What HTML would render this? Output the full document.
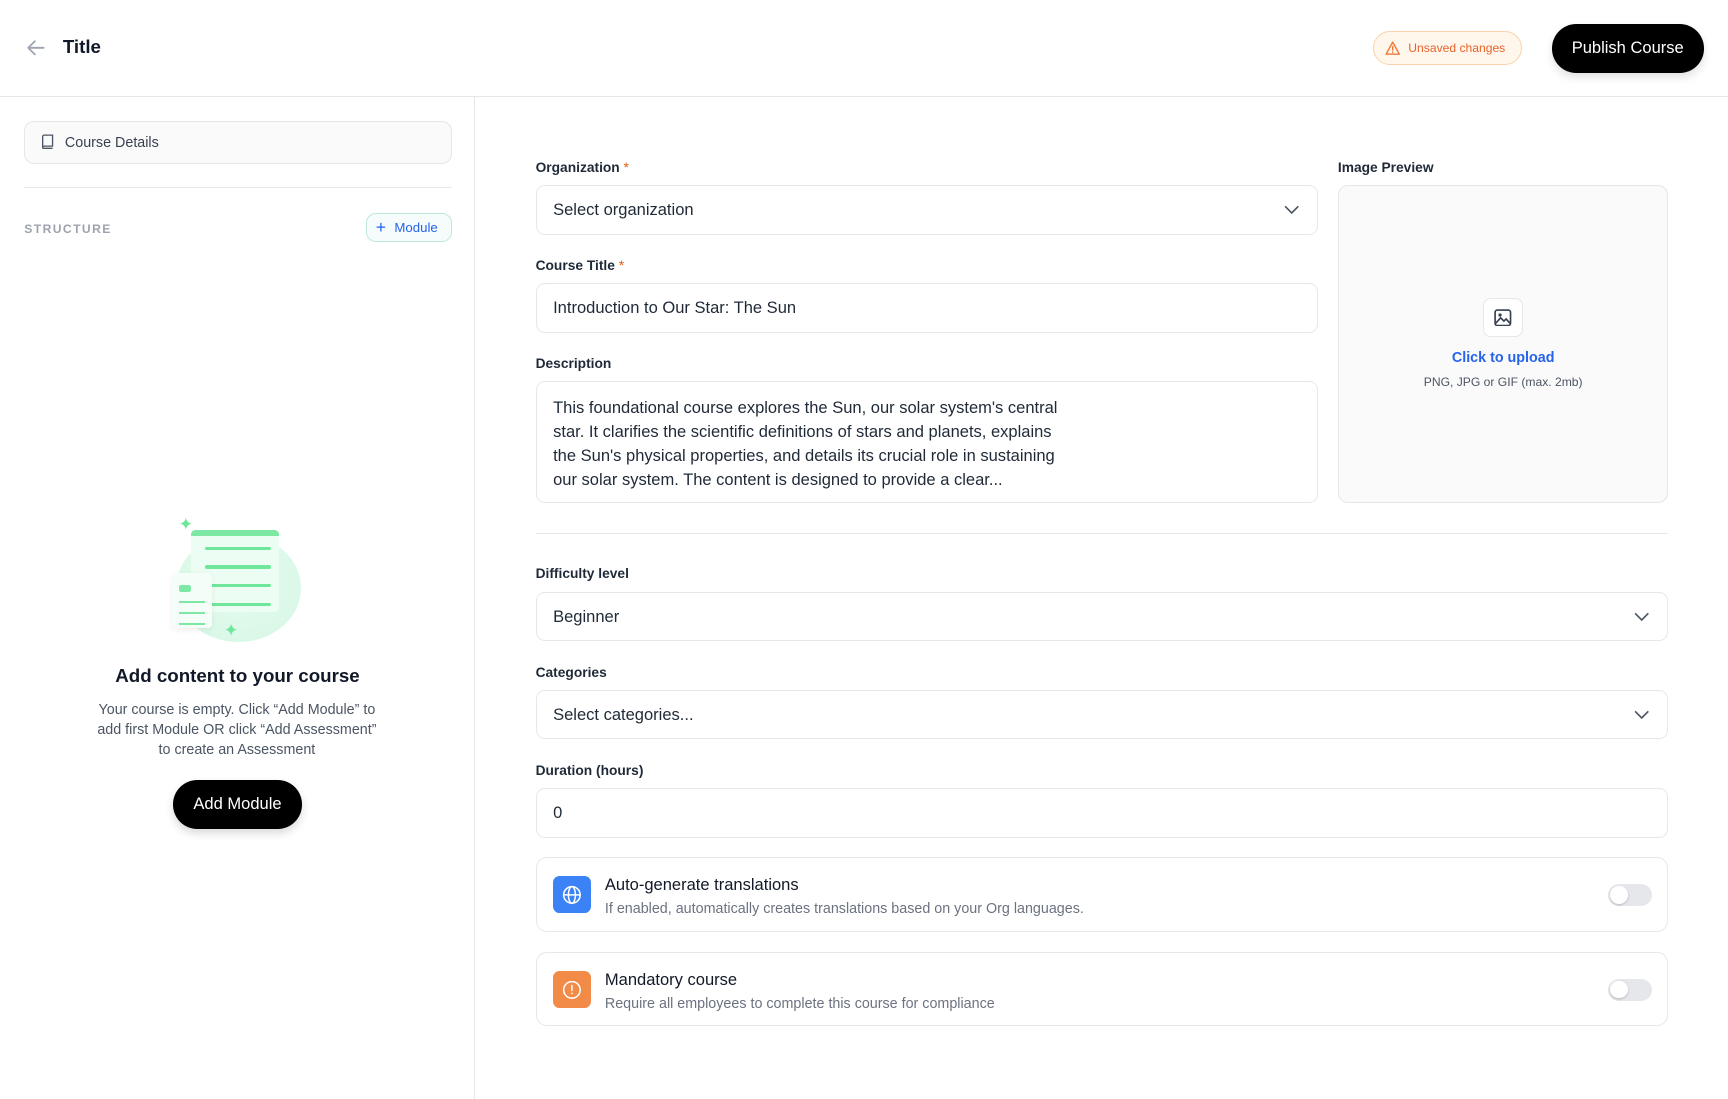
<!DOCTYPE html>
<html><head><meta charset="utf-8"><style>
html{zoom:1.10204}
*{box-sizing:border-box;margin:0;padding:0}
body{width:1568px;height:997px;overflow:hidden;background:#fff;font-family:"Liberation Sans",sans-serif;color:#111827;position:relative}
.abs{position:absolute}
.hdr{left:0;top:0;width:1568px;height:88px;border-bottom:1px solid #e5e7eb}
.side{left:0;top:88px;width:431px;height:909px;border-right:1px solid #e5e7eb}
.lbl{font-size:12.5px;font-weight:bold;color:#1f2937;left:486px}
.lbl b{color:#ea580c;font-weight:normal}
.inp{border:1px solid #e5e7eb;border-radius:8px;background:#fff;font-size:15px;color:#1f2937;padding-left:15px;display:flex;align-items:center}
.chev{position:absolute;right:16px;top:50%;margin-top:-6px}
.card{left:486px;width:1028px;border:1px solid #e5e7eb;border-radius:10px}
.ic{position:absolute;left:15px;top:16px;width:34px;height:34px;border-radius:6px;display:flex;align-items:center;justify-content:center}
.ct{position:absolute;left:62px;top:15px;font-size:15px;color:#111827}
.cs{position:absolute;left:62px;top:39px;font-size:13px;color:#6b7280}
.tg{position:absolute;right:14px;top:23px;width:40px;height:20px;border-radius:10px;background:#e5e7eb}
.tg::after{content:"";position:absolute;left:2px;top:2px;width:16px;height:16px;border-radius:50%;background:#fff;box-shadow:0 1px 2px rgba(0,0,0,.2)}
</style></head><body>
<div class="abs hdr"></div>
<svg class="abs" style="left:24px;top:35px" width="17" height="16" viewBox="0 0 17 16"><path d="M16 8H2M8 2L2 8l6 6" fill="none" stroke="#9ca3af" stroke-width="1.6" stroke-linecap="round" stroke-linejoin="round"/></svg>
<div class="abs" style="left:57px;top:33px;font-size:17px;font-weight:bold;color:#111827">Title</div>
<div class="abs" style="left:1246px;top:28px;width:135px;height:31px;border:1px solid #fcd3a9;background:#fff6ec;border-radius:16px;font-size:11px;color:#e8632a;display:flex;align-items:center;padding-left:31px">Unsaved changes</div>
<svg class="abs" style="left:1257px;top:37px" width="14" height="13" viewBox="0 0 14 13"><path d="M7 1L13 12H1Z" fill="none" stroke="#ef7a3a" stroke-width="1.3" stroke-linejoin="round"/><path d="M7 5v3.2M7 10v.3" stroke="#ef7a3a" stroke-width="1.3" stroke-linecap="round"/></svg>
<div class="abs" style="left:1408px;top:22px;width:138px;height:44px;background:#000;border-radius:22px;color:#fff;font-size:15px;display:flex;align-items:center;justify-content:center;box-shadow:0 4px 8px rgba(0,0,0,.12)">Publish Course</div>

<div class="abs side"></div>
<div class="abs" style="left:22px;top:110px;width:388px;height:39px;border:1px solid #e5e7eb;border-radius:9px;background:#fafafa;font-size:13px;color:#374151;display:flex;align-items:center;padding-left:36px">Course Details</div>
<svg class="abs" style="left:37px;top:122px" width="12" height="14" viewBox="0 0 12 14"><path d="M1.5 12V2.5A1.5 1.5 0 0 1 3 1h7.5v10H3a1.5 1.5 0 0 0-1.5 1.5A1.5 1.5 0 0 0 3 13h7.5" fill="none" stroke="#4b5563" stroke-width="1.2"/></svg>
<div class="abs" style="left:22px;top:170px;width:388px;height:1px;background:#e5e7eb"></div>
<div class="abs" style="left:22px;top:201px;font-size:11px;letter-spacing:1.3px;color:#9ca3af;font-weight:bold">STRUCTURE</div>
<div class="abs" style="left:332px;top:193px;width:78px;height:27px;border:1px solid #bfe8dc;border-radius:9px;background:#f6fcfb;color:#2563eb;font-size:12px;display:flex;align-items:center;padding-left:25px">Module</div>
<div class="abs" style="left:341px;top:200px;color:#2563eb;font-size:16px;line-height:13px">+</div>

<div class="abs" style="left:160px;top:485px;width:113px;height:98px;border-radius:50%;background:radial-gradient(circle at 50% 40%,#e6fbef,#d6f7e4)"></div>
<div class="abs" style="left:173px;top:481px;width:80px;height:74px;background:#ecfdf3;border-top:6px solid #7de8a4;border-radius:4px"></div>
<div class="abs" style="left:186px;top:496px;width:60px;height:3px;background:#6ee79a;border-radius:2px"></div>
<div class="abs" style="left:186px;top:513px;width:60px;height:3px;background:#6ee79a;border-radius:2px"></div>
<div class="abs" style="left:186px;top:530px;width:60px;height:3px;background:#6ee79a;border-radius:2px"></div>
<div class="abs" style="left:186px;top:547px;width:60px;height:3px;background:#6ee79a;border-radius:2px"></div>
<div class="abs" style="left:156px;top:520px;width:36px;height:50px;background:#f4fdf7;border-radius:4px;box-shadow:0 2px 6px rgba(0,0,0,.06)"></div>
<div class="abs" style="left:162px;top:531px;width:11px;height:6px;background:#7de8a4;border-radius:2px"></div>
<div class="abs" style="left:162px;top:545px;width:24px;height:2px;background:#7de8a4"></div>
<div class="abs" style="left:162px;top:555px;width:24px;height:2px;background:#7de8a4"></div>
<div class="abs" style="left:162px;top:565px;width:24px;height:2px;background:#7de8a4"></div>
<div class="abs" style="left:162px;top:466px;color:#6ee79a;font-size:16px">✦</div>
<div class="abs" style="left:203px;top:563px;color:#6ee79a;font-size:16px">✦</div>

<div class="abs" style="left:0;top:603px;width:431px;text-align:center;font-size:17px;font-weight:bold;color:#111827">Add content to your course</div>
<div class="abs" style="left:86px;top:636px;width:258px;text-align:center;font-size:13px;line-height:18px;color:#4b5563">Your course is empty. Click “Add Module” to add first Module OR click “Add Assessment” to create an Assessment</div>
<div class="abs" style="left:157px;top:708px;width:117px;height:44px;background:#000;border-radius:22px;color:#fff;font-size:15px;display:flex;align-items:center;justify-content:center;box-shadow:0 4px 8px rgba(0,0,0,.15)">Add Module</div>

<div class="abs lbl" style="top:145px">Organization <b>*</b></div>
<div class="abs inp" style="left:486px;top:168px;width:710px;height:45px">Select organization<svg class="chev" width="14" height="12" viewBox="0 0 14 12"><path d="M1 3l6 6 6-6" fill="none" stroke="#4b5563" stroke-width="1.5"/></svg></div>
<div class="abs lbl" style="top:234px">Course Title <b>*</b></div>
<div class="abs inp" style="left:486px;top:257px;width:710px;height:45px">Introduction to Our Star: The Sun</div>
<div class="abs lbl" style="top:323px">Description</div>
<div class="abs inp" style="left:486px;top:346px;width:710px;height:110px;align-items:flex-start;padding-top:12px;line-height:22px"><div style="width:465px">This foundational course explores the Sun, our solar system's central star. It clarifies the scientific definitions of stars and planets, explains the Sun's physical properties, and details its crucial role in sustaining our solar system. The content is designed to provide a clear...</div></div>

<div class="abs lbl" style="left:1214px;top:145px">Image Preview</div>
<div class="abs" style="left:1214px;top:168px;width:300px;height:288px;border:1px solid #e5e7eb;border-radius:9px;background:#fafafa"></div>
<div class="abs" style="left:1346px;top:270px;width:36px;height:36px;border:1px solid #e5e7eb;border-radius:7px;background:#fff;display:flex;align-items:center;justify-content:center"><svg width="16" height="16" viewBox="0 0 16 16"><rect x="1" y="1" width="14" height="14" rx="2" fill="none" stroke="#374151" stroke-width="1.5"/><circle cx="5.5" cy="5.5" r="1.5" fill="#374151"/><path d="M1.5 13l4.5-5 3 3 2-2 3.5 4" fill="none" stroke="#374151" stroke-width="1.5"/></svg></div>
<div class="abs" style="left:1214px;top:318px;width:300px;text-align:center;font-size:13px;font-weight:bold;color:#2563eb">Click to upload</div>
<div class="abs" style="left:1214px;top:340px;width:300px;text-align:center;font-size:11px;color:#4b5563">PNG, JPG or GIF (max. 2mb)</div>

<div class="abs" style="left:486px;top:484px;width:1028px;height:1px;background:#e5e7eb"></div>
<div class="abs lbl" style="top:514px">Difficulty level</div>
<div class="abs inp" style="left:486px;top:537px;width:1028px;height:45px">Beginner<svg class="chev" width="14" height="12" viewBox="0 0 14 12"><path d="M1 3l6 6 6-6" fill="none" stroke="#4b5563" stroke-width="1.5"/></svg></div>
<div class="abs lbl" style="top:603px">Categories</div>
<div class="abs inp" style="left:486px;top:626px;width:1028px;height:45px">Select categories...<svg class="chev" width="14" height="12" viewBox="0 0 14 12"><path d="M1 3l6 6 6-6" fill="none" stroke="#4b5563" stroke-width="1.5"/></svg></div>
<div class="abs lbl" style="top:692px">Duration (hours)</div>
<div class="abs inp" style="left:486px;top:715px;width:1028px;height:45px">0</div>

<div class="abs card" style="top:778px;height:68px"><div class="ic" style="background:#3b82f6"><svg width="18" height="18" viewBox="0 0 18 18" fill="none" stroke="#fff" stroke-width="1.4"><circle cx="9" cy="9" r="7.5"/><ellipse cx="9" cy="9" rx="3.2" ry="7.5"/><path d="M1.5 9h15"/></svg></div><div class="ct">Auto-generate translations</div><div class="cs">If enabled, automatically creates translations based on your Org languages.</div><div class="tg"></div></div>
<div class="abs card" style="top:864px;height:67px"><div class="ic" style="background:#f28a48"><svg width="18" height="18" viewBox="0 0 18 18" fill="none" stroke="#fff" stroke-width="1.4"><circle cx="9" cy="9" r="7.5"/><path d="M9 5v4.5M9 12v.4" stroke-linecap="round"/></svg></div><div class="ct">Mandatory course</div><div class="cs">Require all employees to complete this course for compliance</div><div class="tg"></div></div>
</body></html>
